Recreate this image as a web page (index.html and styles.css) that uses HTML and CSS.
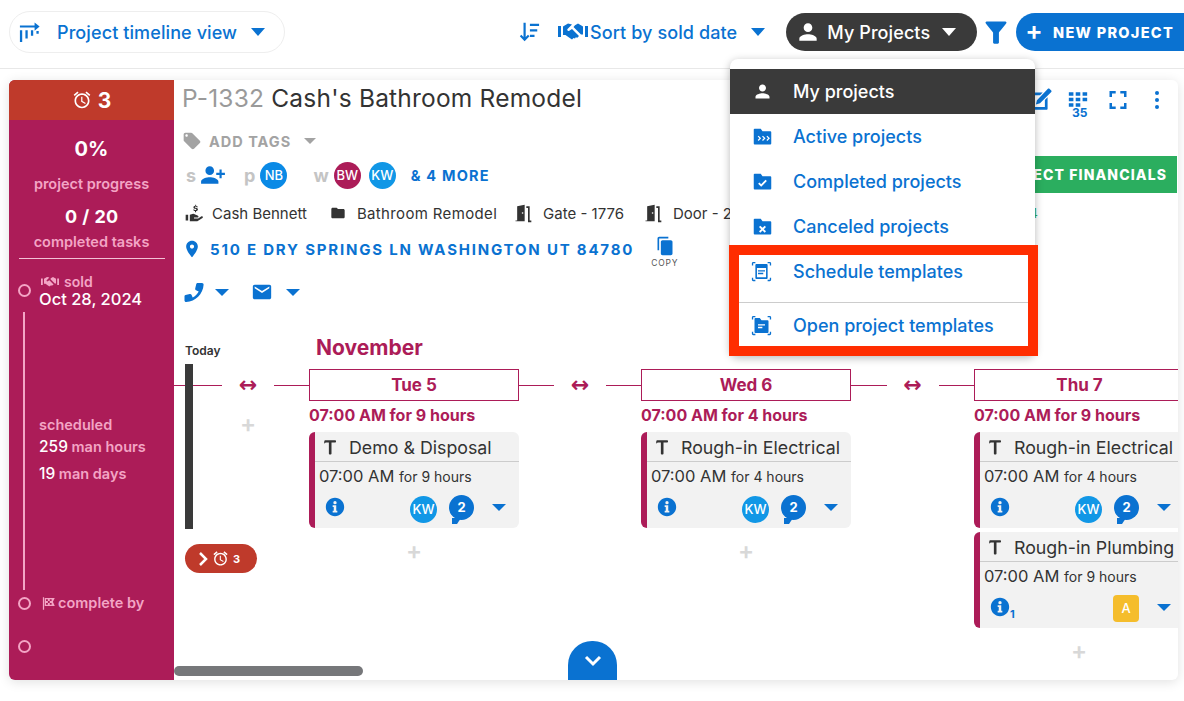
FILE: index.html
```html
<!DOCTYPE html>
<html lang="en">
<head>
<meta charset="utf-8">
<title>Project timeline</title>
<link rel="stylesheet" href="styles.css">
</head>
<body>
<svg class="sprite" aria-hidden="true">
  <symbol id="person" viewBox="0 0 24 24"><path d="M12 12c2.21 0 4-1.79 4-4s-1.79-4-4-4-4 1.79-4 4 1.79 4 4 4zm0 2c-2.67 0-8 1.34-8 4v2h16v-2c0-2.66-5.33-4-8-4z"/></symbol>
  <symbol id="personadd" viewBox="0 0 24 24"><path d="M9 12c2.21 0 4-1.79 4-4s-1.79-4-4-4-4 1.79-4 4 1.79 4 4 4zm9-2V7h2v3h3v2h-3v3h-2v-3h-3v-2h3zm-9 4c-2.67 0-8 1.34-8 4v2h16v-2c0-2.66-5.33-4-8-4z"/></symbol>
  <symbol id="funnel" viewBox="0 0 24 24"><path d="M3.2 4.600C5.500 7.600 9.500 12.600 9.500 12.600V21c0 .55.45 1 1 1h3c.55 0 1-.45 1-1v-8.400s4-5 6.300-8c.51-.66.04-1.600-.79-1.600H4c-.83 0-1.300.94-.8 1.600z"/></symbol>
  <symbol id="phone" viewBox="0 0 24 24"><path d="M3.500 15l4.300-1c.7-.2 1.400.2 1.700.8l1.200 2.800c2.300-1.200 4.800-3.700 6-6L14 10.300c-.6-.3-1-1-.8-1.700l1-4.300C14.400 3.500 15 3 15.800 3H20c.9 0 1.700.8 1.600 1.700C21 14 13.500 21.500 4.200 22.100 3.300 22.200 2.500 21.400 2.500 20.500v-4.200c0-.6.400-1.200 1-1.300z"/></symbol>
  <symbol id="mail" viewBox="0 0 24 24"><path d="M20 4H4c-1.1 0-1.99.9-1.99 2L2 18c0 1.1.9 2 2 2h16c1.1 0 2-.9 2-2V6c0-1.1-.9-2-2-2zm0 4l-8 5-8-5V6l8 5 8-5v2z"/></symbol>
  <symbol id="place" viewBox="0 0 24 24"><path d="M12 2C8.13 2 5 5.13 5 9c0 5.25 7 13 7 13s7-7.75 7-13c0-3.87-3.13-7-7-7zm0 9.5c-1.38 0-2.5-1.12-2.5-2.5s1.12-2.5 2.5-2.5 2.5 1.12 2.5 2.5-1.12 2.5-2.5 2.5z"/></symbol>
  <symbol id="tag" viewBox="0 0 24 24"><path d="M21.41 11.58l-9-9C12.05 2.22 11.55 2 11 2H4c-1.1 0-2 .9-2 2v7c0 .55.22 1.05.59 1.42l9 9c.36.36.86.58 1.41.58.55 0 1.05-.22 1.41-.59l7-7c.37-.36.59-.86.59-1.41 0-.55-.23-1.06-.59-1.42zM5.5 7C4.67 7 4 6.33 4 5.5S4.67 4 5.5 4 7 4.67 7 5.5 6.33 7 5.5 7z"/></symbol>
  <symbol id="folder" viewBox="0 0 24 24"><path d="M10 4H4c-1.1 0-1.99.9-1.99 2L2 18c0 1.1.9 2 2 2h16c1.1 0 2-.9 2-2V8c0-1.1-.9-2-2-2h-8l-2-2z"/></symbol>
  <symbol id="info" viewBox="0 0 24 24"><path d="M12 1C5.9 1 1 5.9 1 12s4.9 11 11 11 11-4.900 11-11S18.100 1 12 1zm2.800 17.500H9.200v-2h1.300V12H9.200v-2h4.300v6.500h1.300v2zM12 8.800a2 2 0 1 1 0-4 2 2 0 0 1 0 4z"/></symbol>
  <symbol id="alarm" viewBox="0 0 24 24"><path d="M22 5.72l-4.6-3.86-1.29 1.53 4.6 3.86L22 5.72zM7.88 3.39L6.6 1.86 2 5.71l1.29 1.53 4.59-3.85zM12.5 8H11v6l4.75 2.85.75-1.23-4-2.37V8zM12 4c-4.97 0-9 4.03-9 9s4.02 9 9 9c4.97 0 9-4.03 9-9s-4.03-9-9-9zm0 16c-3.87 0-7-3.13-7-7s3.13-7 7-7 7 3.13 7 7-3.13 7-7 7z"/></symbol>
  <symbol id="edit" viewBox="0 0 24 24"><path d="M20.700 1.600l1.700 1.700c.4.400.4 1 0 1.400L12 15.100l-3.800 1 1-3.800L19.300 1.600c.4-.4 1-.4 1.400 0zM4 5h10.500l-2.500 2.500H5.500v11h11V12l2.500-2.500V20c0 .6-.4 1-1 1H4c-.6 0-1-.4-1-1V6c0-.6.4-1 1-1z"/></symbol>
  <symbol id="full" viewBox="0 0 24 24"><path d="M7 15H3.500v6h6.200v-2.500H6V15zM3.500 9H6V5.500h3.700V3H3.500v6zM18 18.500h-3.700V21h6.200v-6H18v3.500zM14.300 3v2.500H18V9h2.500V3h-6.200z"/></symbol>
  <symbol id="copy" viewBox="0 0 24 24"><path d="M16 1H5c-1.100 0-2 .9-2 2v14h2V3h11V1zm3 4H9c-1.100 0-2 .9-2 2v14c0 1.100.9 2 2 2h10c1.100 0 2-.9 2-2V7c0-1.100-.9-2-2-2z"/></symbol>
  <symbol id="hammer" viewBox="0 0 24 24"><path d="M5.500 3H19c.6 0 1 .4 1 1v1c0 .6-.4 1-1 1h-5v14.500c0 .8-.6 1.500-1.500 1.500h-.5c-.8 0-1.500-.7-1.500-1.500V6H7C6 6 5 6.500 4.500 7.500 4 6 4.300 3 5.500 3z"/></symbol>
  <symbol id="door" viewBox="0 0 24 24"><path d="M3 21h2V4l9-2v20l-11-.2V21zM11.500 11a1 1 0 1 0 0 2 1 1 0 0 0 0-2zM16 4h4v17h2v2h-4V6h-2V4z"/></symbol>
  <symbol id="hand" viewBox="0 0 24 24"><path d="M2 14h3v7H2v-7zm5 0l4-1c1 0 5 2 6 2.500.8.500.5 2-.8 2H12v1h5l4-2.500c1.500-.5 2.300 1 1.200 2L16 22H7v-8zM14.500 2v1.200c1.200.1 2 .8 2.100 1.800h-1.400c-.1-.5-.5-.7-1.100-.7-.6 0-1 .3-1 .7 0 .5.500.6 1.300.8 1.200.3 2.300.7 2.300 2 0 1-.8 1.700-2.200 1.900V11h-1.300V9.700c-1.300-.2-2.200-.9-2.200-2h1.400c.1.500.600.8 1.300.8.700 0 1.100-.3 1.100-.7 0-.5-.500-.6-1.300-.8-1.200-.3-2.200-.7-2.200-2 0-1 .8-1.700 2.200-1.800V2h1.300z"/></symbol>
  <symbol id="handshake" viewBox="0 0 30 20"><path d="M0 4h3v11H0zM27 4h3v11h-3zM5 4.500l5-3 4 1-4.500 4.500c-.8.900.4 2.600 1.800 1.800L14 7l7 7-2 2-1-1-1 1.500-1.500-.5-1.500 1.500-3-2-3.500-2.500H5v-9zM25 4.500v8h-2L15.500 5 17 3.300l3-1.800 5 3z"/></symbol>
  <symbol id="sort" viewBox="0 0 24 24"><path d="M6 2h2.400v15.500l2.500-2.500 1.600 1.600L7.200 22 2 16.600 3.600 15 6 17.500V2zM13 3h10v2.500H13V3zm0 6h8v2.500h-8V9zm0 6h5v2.500h-5V15z"/></symbol>
  <symbol id="timeline" viewBox="0 0 24 24"><path d="M1 10h2.500v13H1zM7 10h2.500v9H7zM13 10h2.500v6H13zM19 11h2.500v3H19zM1 5h16V1.500L22.500 6 17 10.500V7H1z"/></symbol>
  <symbol id="flag" viewBox="0 0 24 24"><path d="M3 2h2v20H3V2zm3 1h16l-3 6 3 7H6V3zm2 2v3h3V5H8zm6 0v3h3V5h-3zm-3 3v3h3V8h-3zm-3 3v3h3v-3H8zm6 0v3h3v-3h-3z"/></symbol>
  <symbol id="f-active" viewBox="0 0 24 24"><path d="M3 3h7l2 3h9c.6 0 1 .4 1 1v13c0 .6-.4 1-1 1H3c-.6 0-1-.4-1-1V4c0-.6.4-1 1-1zm3.500 9l2 2-2 2 1 1 3-3-3-3-1 1zm5 0l2 2-2 2 1 1 3-3-3-3-1 1zm5 0l2 2-2 2 1 1 3-3-3-3-1 1z"/></symbol>
  <symbol id="f-done" viewBox="0 0 24 24"><path d="M3 3h7l2 3h9c.6 0 1 .4 1 1v13c0 .6-.4 1-1 1H3c-.6 0-1-.4-1-1V4c0-.6.4-1 1-1zm5.500 10L7 14.500l3.500 3.500L17 11.500 15.500 10l-5 5-2-2z"/></symbol>
  <symbol id="f-cancel" viewBox="0 0 24 24"><path d="M3 3h7l2 3h9c.6 0 1 .4 1 1v13c0 .6-.4 1-1 1H3c-.6 0-1-.4-1-1V4c0-.6.4-1 1-1zm6.500 8L8 12.500l2.500 2.500L8 17.500 9.500 19l2.500-2.500 2.500 2.500 1.500-1.500-2.500-2.500 2.500-2.500-1.500-1.500L12 13.500 9.500 11z"/></symbol>
  <symbol id="tpl-cal" viewBox="0 0 24 24"><path fill-rule="evenodd" d="M1 5V2.500C1 1.700 1.700 1 2.500 1H5v1.500H2.500V5H1zm18-4h2.500c.8 0 1.500.7 1.500 1.500V5h-1.500V2.500H19V1zM1 19h1.500v2.500H5V23H2.500C1.700 23 1 22.300 1 21.500V19zm20.500 0H23v2.500c0 .8-.7 1.500-1.500 1.500H19v-1.500h2.500V19zM6 3.500h12c.6 0 1 .4 1 1v15c0 .6-.4 1-1 1H6c-.6 0-1-.4-1-1v-15c0-.6.4-1 1-1zm.800 4.500v10.700h10.400V8H6.800zM8 10.500h8V12H8v-1.500zm0 3h6V15H8v-1.500z"/></symbol>
  <symbol id="tpl-open" viewBox="0 0 24 24"><path fill-rule="evenodd" d="M1 5V2.500C1 1.700 1.700 1 2.500 1H5v1.500H2.500V5H1zm18-4h2.500c.8 0 1.500.7 1.500 1.500V5h-1.500V2.500H19V1zM1 19h1.500v2.500H5V23H2.500C1.700 23 1 22.300 1 21.500V19zm20.500 0H23v2.500c0 .8-.7 1.500-1.500 1.500H19v-1.500h2.500V19zM5 3.500h5L12 6h7c.6 0 1 .4 1 1v12.500c0 .6-.4 1-1 1H5c-.6 0-1-.4-1-1V4.500c0-.6.4-1 1-1zm3 7V12h8v-1.500H8zm0 3V15h5v-1.500H8z"/></symbol>
  <symbol id="grid" viewBox="0 0 24 18"><path d="M2 1h5v4H2zM9.500 1h5v4h-5zM17 1h5v4h-5zM2 7h5v4H2zM9.500 7h5v4h-5zM17 7h5v4h-5zM2 13h5v4H2zM9.500 13h5v4h-5z"/></symbol>
</svg>

<header class="topbar">
  <div class="view-pill">
    <svg class="ico ico-timeline"><use href="#timeline"/></svg>
    <span>Project timeline view</span>
    <i class="caret caret-lg"></i>
  </div>
  <div class="sort">
    <svg class="ico ico-sort"><use href="#sort"/></svg>
    <svg class="ico ico-shake"><use href="#handshake"/></svg>
    <span>Sort by sold date</span>
    <i class="caret caret-lg"></i>
  </div>
  <div class="my-pill">
    <svg class="ico ico-person"><use href="#person"/></svg>
    <span>My Projects</span>
    <i class="caret caret-lg caret-white"></i>
  </div>
  <svg class="ico ico-funnel"><use href="#funnel"/></svg>
  <div class="new-btn"><span class="plus">+</span><span>NEW PROJECT</span></div>
</header>

<main class="board">
  <aside class="side">
    <div class="alert"><svg class="ico ico-alarm"><use href="#alarm"/></svg><b>3</b></div>
    <div class="pct">0%</div>
    <div class="lbl lbl-progress">project progress</div>
    <div class="count">0 / 20</div>
    <div class="lbl lbl-tasks">completed tasks</div>
    <div class="side-rule"></div>
    <div class="track">
      <div class="sold">
        <span class="dot"></span>
        <div class="sold-lbl"><svg class="ico ico-shake-s"><use href="#handshake"/></svg>sold</div>
        <div class="sold-date">Oct 28, 2024</div>
      </div>
      <div class="sched">
        <div class="lbl">scheduled</div>
        <div class="stat stat-first"><b>259</b> man hours</div>
        <div class="stat"><b>19</b> man days</div>
      </div>
      <div class="done-by">
        <span class="dot"></span>
        <svg class="ico ico-flag"><use href="#flag"/></svg>
        <span class="lbl">complete by</span>
      </div>
      <div class="last-dot"><span class="dot"></span></div>
    </div>
  </aside>

  <section class="main">
    <div class="title-row">
      <h1><span class="code">P-1332</span> Cash's Bathroom Remodel</h1>
      <div class="tools">
        <svg class="ico ico-edit"><use href="#edit"/></svg>
        <div class="grid35"><svg class="ico ico-grid"><use href="#grid"/></svg><span>35</span></div>
        <svg class="ico ico-full"><use href="#full"/></svg>
        <div class="kebab"><i></i><i></i><i></i></div>
      </div>
    </div>
    <div class="tags-row">
      <svg class="ico ico-tag"><use href="#tag"/></svg>
      <span>ADD TAGS</span>
      <i class="caret caret-grey"></i>
    </div>
    <div class="people-row">
      <span class="role">s</span>
      <svg class="ico ico-add"><use href="#personadd"/></svg>
      <span class="role role-p">p</span>
      <span class="avatar av-blue">NB</span>
      <span class="role role-w">w</span>
      <span class="avatar av-red">BW</span>
      <span class="avatar av-sky">KW</span>
      <span class="more">&amp; 4 MORE</span>
      <div class="fin-btn">PROJECT FINANCIALS</div>
    </div>
    <div class="info-row">
      <svg class="ico ico-hand"><use href="#hand"/></svg><span class="info-name">Cash Bennett</span>
      <svg class="ico ico-folder"><use href="#folder"/></svg><span class="info-type">Bathroom Remodel</span>
      <svg class="ico ico-door"><use href="#door"/></svg><span class="info-gate">Gate - 1776</span>
      <svg class="ico ico-door"><use href="#door"/></svg><span>Door - 2</span>
      <span class="green-mark">4</span>
    </div>
    <div class="addr-row">
      <svg class="ico ico-place"><use href="#place"/></svg>
      <span class="addr">510 E DRY SPRINGS LN WASHINGTON UT 84780</span>
      <div class="copy"><svg class="ico ico-copy"><use href="#copy"/></svg><span>COPY</span></div>
    </div>
    <div class="contact-row">
      <svg class="ico ico-phone"><use href="#phone"/></svg>
      <i class="caret"></i>
      <svg class="ico ico-mail"><use href="#mail"/></svg>
      <i class="caret"></i>
    </div>

    <div class="timeline">
      <div class="today">
        <div class="today-lbl">Today</div>
        <div class="today-bar"></div>
        <div class="alarm-pill">
          <svg class="pill-chev" viewBox="0 0 10 16"><path d="M2 2l6 6-6 6"/></svg>
          <svg class="ico ico-alarm-s"><use href="#alarm"/></svg>
          <b>3</b>
        </div>
      </div>

      <div class="link link-first">
        <div class="link-row"><span class="ln"></span><span class="arrow">&#8596;</span><span class="ln"></span></div>
        <div class="add add-link">+</div>
      </div>

      <div class="day">
        <div class="month">November</div>
        <div class="day-head">Tue 5</div>
        <div class="day-time">07:00 AM for 9 hours</div>
        <article class="task">
          <div class="task-head"><svg class="ico ico-hammer"><use href="#hammer"/></svg>Demo &amp; Disposal</div>
          <div class="task-time"><span>07:00 AM</span> <small>for 9 hours</small></div>
          <div class="task-foot">
            <svg class="ico ico-info"><use href="#info"/></svg>
            <span class="spacer"></span>
            <span class="avatar av-sky av-s">KW</span>
            <span class="bubble">2</span>
            <i class="caret"></i>
          </div>
        </article>
        <div class="add">+</div>
      </div>

      <div class="link">
        <div class="link-row"><span class="ln"></span><span class="arrow">&#8596;</span><span class="ln"></span></div>
      </div>

      <div class="day">
        <div class="month"></div>
        <div class="day-head">Wed 6</div>
        <div class="day-time">07:00 AM for 4 hours</div>
        <article class="task">
          <div class="task-head"><svg class="ico ico-hammer"><use href="#hammer"/></svg>Rough-in Electrical</div>
          <div class="task-time"><span>07:00 AM</span> <small>for 4 hours</small></div>
          <div class="task-foot">
            <svg class="ico ico-info"><use href="#info"/></svg>
            <span class="spacer"></span>
            <span class="avatar av-sky av-s">KW</span>
            <span class="bubble">2</span>
            <i class="caret"></i>
          </div>
        </article>
        <div class="add">+</div>
      </div>

      <div class="link link-wide">
        <div class="link-row"><span class="ln"></span><span class="arrow">&#8596;</span><span class="ln"></span></div>
      </div>

      <div class="day">
        <div class="month"></div>
        <div class="day-head">Thu 7</div>
        <div class="day-time">07:00 AM for 9 hours</div>
        <article class="task">
          <div class="task-head"><svg class="ico ico-hammer"><use href="#hammer"/></svg>Rough-in Electrical</div>
          <div class="task-time"><span>07:00 AM</span> <small>for 4 hours</small></div>
          <div class="task-foot">
            <svg class="ico ico-info"><use href="#info"/></svg>
            <span class="spacer"></span>
            <span class="avatar av-sky av-s">KW</span>
            <span class="bubble">2</span>
            <i class="caret"></i>
          </div>
        </article>
        <article class="task task-next">
          <div class="task-head"><svg class="ico ico-hammer"><use href="#hammer"/></svg>Rough-in Plumbing</div>
          <div class="task-time"><span>07:00 AM</span> <small>for 9 hours</small></div>
          <div class="task-foot">
            <svg class="ico ico-info"><use href="#info"/></svg><sub class="info-n">1</sub>
            <span class="spacer"></span>
            <span class="letter">A</span>
            <i class="caret"></i>
          </div>
        </article>
        <div class="add">+</div>
      </div>
    </div>

    <div class="scrollbar"></div>
    <div class="expand"><svg viewBox="0 0 20 12"><path d="M3 2l7 7 7-7"/></svg></div>
  </section>
</main>

<nav class="menu">
  <div class="menu-item menu-active"><svg class="ico"><use href="#person"/></svg>My projects</div>
  <div class="menu-item"><svg class="ico"><use href="#f-active"/></svg>Active projects</div>
  <div class="menu-item"><svg class="ico"><use href="#f-done"/></svg>Completed projects</div>
  <div class="menu-item"><svg class="ico"><use href="#f-cancel"/></svg>Canceled projects</div>
  <div class="menu-marked">
    <div class="menu-item menu-tpl menu-tpl-first"><svg class="ico"><use href="#tpl-cal"/></svg>Schedule templates</div>
    <div class="menu-item menu-tpl menu-tpl-last"><svg class="ico"><use href="#tpl-open"/></svg>Open project templates</div>
  </div>
</nav>
</body>
</html>
```
FILE: styles.css
```css
* { box-sizing: border-box; }
html, body { margin: 0; height: 701px; overflow: hidden; }
body {
  position: relative;
  background: #fff;
  color: #333;
  font-family: Inter, "Noto Sans", sans-serif;
}
.sprite { display: none; }
.ico { display: block; flex: none; fill: #0a72d1; }

.caret {
  display: block; flex: none; width: 0; height: 0;
  border-left: 7px solid transparent;
  border-right: 7px solid transparent;
  border-top: 7px solid #0a72d1;
}
.caret-lg { border-left-width: 7px; border-right-width: 7px; border-top-width: 8px; }
.caret-white { border-top-color: #fff; }
.caret-grey { border-left-width: 6px; border-right-width: 6px; border-top-width: 6px; border-top-color: #a3a3a3; }

/* top bar */
.topbar {
  height: 69px;
  padding: 0 0 4px 9px;
  display: flex;
  align-items: center;
  border-bottom: 1px solid #e8e8e8;
  color: #0a72d1;
  font-size: 18px;
  font-weight: 500;
  letter-spacing: .1px;
}
.view-pill {
  width: 276px; height: 42px;
  display: flex; align-items: center;
  padding-left: 9px;
  border: 1px solid #eee;
  border-radius: 21px;
}
.ico-timeline { width: 22px; height: 22px; margin-right: 16px; }
.view-pill .caret { margin-left: 14px; }
.sort { display: flex; align-items: center; margin-left: 233px; }
.ico-sort { width: 22px; height: 22px; margin-right: 18px; }
.ico-shake { width: 30px; height: 20px; margin-right: 2px; }
.sort .caret { margin-left: 14px; }
.my-pill {
  width: 191px; height: 38px;
  margin-left: 21px;
  display: flex; align-items: center;
  padding-left: 9px;
  border-radius: 19px;
  background: #3a3a3a;
  color: #fff;
}
.ico-person { width: 26px; height: 26px; fill: #fff; margin-right: 6px; }
.my-pill .caret { margin-left: 12px; }
.ico-funnel { width: 28px; height: 28px; margin: 0 6px 0 5px; }
.new-btn {
  flex: 1; height: 38px;
  display: flex; align-items: center;
  padding-left: 9px;
  border-radius: 19px 0 0 19px;
  background: #0a72d1;
  color: #fff;
  font-size: 14.5px; font-weight: 800; letter-spacing: 1.3px;
  white-space: nowrap;
}
.plus { font-size: 26px; font-weight: 600; line-height: 1; margin: -3px 9px 0 0; }

/* board */
.board {
  display: flex;
  height: 600px; width: 1169px;
  margin: 11px 0 0 9px;
  border-radius: 6px;
  background: #fff;
  box-shadow: 0 2px 12px rgba(0,0,0,.12);
}
.side {
  width: 165px; flex: none;
  display: flex; flex-direction: column; align-items: center;
  background: #ac1c58;
  border-radius: 6px 0 0 6px;
  color: #fff;
}
.alert {
  width: 100%; height: 40px;
  display: flex; align-items: center; justify-content: center; gap: 6px;
  background: #bf3a2b;
  border-radius: 6px 0 0 0;
  font-size: 21px;
}
.ico-alarm { width: 20px; height: 20px; fill: #fff; }
.pct { margin-top: 17px; font-size: 20px; font-weight: 700; line-height: 24px; }
.lbl { color: #f3a5c5; font-size: 14.5px; font-weight: 600; line-height: 18px; white-space: nowrap; }
.lbl-progress { margin-top: 14px; }
.count { margin-top: 13px; font-size: 18px; font-weight: 700; line-height: 22px; word-spacing: 1px; }
.lbl-tasks { margin-top: 5px; }
.side-rule { width: 146px; height: 1px; margin-top: 7px; background: #f3c1d6; }
.track { position: relative; flex: 1; width: 100%; padding-left: 30px; }
.track::before {
  content: ""; position: absolute; left: 14px; top: 53px;
  width: 2px; height: 278px; background: #f3a5c5;
}
.dot {
  position: absolute; left: 9px;
  width: 13px; height: 13px;
  border: 2px solid #f3a5c5; border-radius: 50%;
}
.sold { position: relative; margin-top: 14px; }
.sold .dot { left: -21px; top: 11px; }
.sold-lbl { display: flex; align-items: center; gap: 5px; margin-left: 2px; color: #f3a5c5; font-size: 14px; font-weight: 600; line-height: 17px; }
.ico-shake-s { width: 18px; height: 12px; fill: #f3a5c5; }
.sold-date { font-size: 16.5px; font-weight: 500; line-height: 18px; white-space: nowrap; }
.sched { margin-top: 108px; }
.stat { margin-top: 8px; color: #f3a5c5; font-size: 14.5px; font-weight: 600; line-height: 19px; }
.stat b { color: #fff; font-size: 15.5px; font-weight: 500; }
.stat-first { margin-top: 3px; }
.done-by { position: relative; display: flex; align-items: center; gap: 2px; margin-top: 111px; height: 18px; margin-left: 2px; }
.done-by .dot { left: -23px; top: 3px; }
.ico-flag { width: 15px; height: 15px; fill: #f3a5c5; }
.last-dot { position: relative; margin-top: 28px; }
.last-dot .dot { left: -21px; top: 0; }

/* main */
.main { position: relative; flex: 1; min-width: 0; overflow: hidden; }
.title-row { display: flex; align-items: center; height: 36px; padding-left: 8px; }
h1 { margin: 0; font-size: 24.5px; font-weight: 400; letter-spacing: .2px; white-space: nowrap; }
.code { color: #9a9a9a; }
.tools { display: flex; align-items: center; margin-left: auto; }
.ico-edit { width: 26px; height: 26px; margin-top: 4px; }
.grid35 { position: relative; width: 26px; height: 34px; margin: 20px 0 0 14px; }
.ico-grid { width: 22px; height: 17px; }
.grid35 span { position: absolute; left: 5px; top: 14px; font-size: 12px; font-weight: 700; color: #0a72d1; }
.ico-full { width: 24px; height: 24px; margin: 4px 0 0 13px; }
.kebab { display: flex; flex-direction: column; gap: 3px; margin: 4px 19px 0 25px; }
.kebab i { width: 4px; height: 4px; border-radius: 50%; background: #0a72d1; }

.tags-row { display: flex; align-items: center; height: 24px; margin-top: 13px; padding-left: 8px; color: #a3a3a3; font-size: 14.5px; font-weight: 700; letter-spacing: 1px; }
.ico-tag { width: 20px; height: 20px; fill: #a3a3a3; margin-right: 7px; }
.tags-row .caret { margin-left: 13px; }

.people-row { display: flex; align-items: center; height: 28px; margin-top: 8px; padding-left: 12px; }
.role { color: #c4c4c4; font-size: 18px; font-weight: 700; }
.ico-add { width: 28px; height: 26px; margin-left: 3px; }
.role-p { margin-left: 17px; margin-right: 5px; }
.role-w { margin-left: 26px; margin-right: 5px; }
.avatar {
  display: flex; align-items: center; justify-content: center;
  width: 27px; height: 27px; flex: none;
  border-radius: 50%;
  color: #fff; font-size: 13px; font-weight: 500;
}
.av-blue { background: #0a8ae6; }
.av-red { background: #ac1c58; }
.av-sky { background: #1197e6; margin-left: 8px; }
.av-red + .av-sky { margin-left: 8px; }
.more { margin-left: 15px; color: #0a72d1; font-size: 14.5px; font-weight: 700; letter-spacing: 1.2px; white-space: nowrap; }
.fin-btn {
  margin: -1px 1px 0 auto;
  height: 37px; flex: none;
  display: flex; align-items: center;
  padding: 0 10px 0 20px;
  background: #2bae5f;
  color: #fff; font-size: 14px; font-weight: 800; letter-spacing: 1.1px;
  white-space: nowrap;
}

.info-row { display: flex; align-items: center; height: 22px; margin-top: 13px; padding-left: 10px; font-size: 15px; white-space: nowrap; }
.ico-hand { width: 20px; height: 20px; fill: #333; margin-right: 8px; }
.info-name { margin-right: 23px; }
.ico-folder { width: 16px; height: 16px; fill: #333; margin-right: 11px; }
.info-type { margin-right: 16px; letter-spacing: .35px; }
.ico-door { width: 20px; height: 20px; fill: #333; margin-right: 10px; }
.info-gate { margin-right: 19px; }
.green-mark { margin-left: auto; margin-right: 140px; color: #2bae5f; font-size: 13px; }

.addr-row { display: flex; align-items: center; height: 24px; margin-top: 13px; padding-left: 8px; }
.ico-place { width: 20px; height: 22px; margin-right: 8px; }
.addr { color: #0a72d1; font-size: 15px; font-weight: 700; letter-spacing: 1.8px; white-space: nowrap; }
.copy { display: flex; flex-direction: column; align-items: center; gap: 2px; margin: 6px 0 0 17px; color: #555; font-size: 8.500px; letter-spacing: .8px; line-height: 10px; }
.ico-copy { width: 20px; height: 20px; }

.contact-row { display: flex; align-items: center; height: 24px; margin-top: 19px; padding-left: 8px; }
.ico-phone { width: 24px; height: 24px; }
.contact-row .caret { margin-left: 9px; }
.ico-mail { width: 22px; height: 22px; margin-left: 22px; }
.ico-mail + .caret { margin-left: 13px; }

/* timeline */
.timeline { position: relative; display: flex; margin-top: 32px; }
.today { position: absolute; left: 11px; top: 7px; z-index: 1; }
.today-lbl { font-size: 12px; font-weight: 600; line-height: 16px; }
.today-bar { width: 8px; height: 165px; margin-top: 5px; background: #3a3a3a; }
.alarm-pill {
  display: flex; align-items: center; gap: 4px;
  width: 72px; height: 29px; margin-top: 15px; padding-left: 13px;
  border-radius: 15px;
  background: #bf3a2b; color: #fff; font-size: 11px;
}
.pill-chev { width: 10px; height: 16px; fill: none; stroke: #fff; stroke-width: 2.5; }
.ico-alarm-s { width: 17px; height: 17px; fill: #fff; }

.link { flex: none; width: 122px; padding-top: 33px; }
.link-wide { width: 123px; }
.link-first { width: 135px; }
.link-row { display: flex; align-items: center; height: 32px; }
.ln { flex: 1; height: 1px; background: #ac1c58; }
.arrow { width: 52px; text-align: center; color: #ac1c58; font-size: 22px; font-weight: 700; line-height: 1; font-family: "DejaVu Sans", sans-serif; }
.link-first .ln:first-child { flex: none; width: 48px; }
.add { color: #d8d8d8; font-size: 24px; font-weight: 600; line-height: 24px; text-align: center; margin-top: 11px; }
.add-link { margin: 11px 0 0 48px; width: 52px; }

.day { flex: none; width: 210px; }
.month { height: 33px; color: #ac1c58; font-size: 21px; font-weight: 700; line-height: 24px; padding-left: 7px; }
.day-head {
  height: 32px;
  display: flex; align-items: center; justify-content: center;
  border: 1px solid #ac1c58;
  color: #ac1c58; font-size: 17px; font-weight: 700;
}
.day:last-child .day-head { border-right: 0; }
.day-time { height: 31px; color: #ac1c58; font-size: 16px; font-weight: 700; line-height: 29px; white-space: nowrap; }
.task {
  height: 96px;
  border-left: 6px solid #ac1c58;
  border-radius: 6px;
  background: #f2f2f2;
}
.task-next { margin-top: 4px; }
.task-head {
  display: flex; align-items: center;
  height: 30px; padding: 2px 0 0 6px;
  border-bottom: 1px solid #ccc;
  font-size: 17.8px; white-space: nowrap;
}
.ico-hammer { width: 18px; height: 18px; fill: #333; margin: -2px 10px 0 0; }
.task-time { height: 30px; padding-left: 4px; font-size: 16.5px; line-height: 29px; white-space: nowrap; }
.task-time small { font-size: 14px; }
.task-foot { display: flex; align-items: center; height: 32px; padding: 0 13px 2px 10px; }
.ico-info { width: 20px; height: 20px; }
.info-n { align-self: flex-end; margin-bottom: 2px; color: #0a72d1; font-size: 11px; font-weight: 700; line-height: 12px; }
.spacer { flex: 1; }
.av-s { margin: 4px 0 0; }
.bubble {
  position: relative;
  display: flex; align-items: center; justify-content: center;
  width: 25px; height: 25px; margin: 0 0 0 12px;
  border-radius: 50%;
  background: #0a72d1; color: #fff; font-size: 13px; font-weight: 700;
}
.bubble::after {
  content: ""; position: absolute; left: 3px; bottom: -4px;
  border-left: 5px solid #0a72d1;
  border-right: 4px solid transparent;
  border-top: 6px solid #0a72d1;
}
.task-foot .caret { margin-left: 18px; }
.letter {
  display: flex; align-items: center; justify-content: center;
  width: 26px; height: 27px; margin-top: 2px;
  border-radius: 4px;
  background: #f5bd2c; color: #fff; font-size: 13px; font-weight: 500;
}

.scrollbar { position: absolute; left: 0; top: 586px; width: 189px; height: 10px; border-radius: 5px; background: #76777a; }
.expand {
  position: absolute; left: 394px; bottom: 0;
  width: 49px; height: 39px;
  display: flex; align-items: center; justify-content: center;
  border-radius: 24px 24px 0 0;
  background: #0a72d1;
}
.expand svg { width: 20px; height: 12px; fill: none; stroke: #fff; stroke-width: 3; }

/* dropdown */
.menu {
  position: absolute; left: 730px; top: 59px;
  width: 305px; height: 297px;
  padding-top: 10px;
  border-radius: 8px;
  background: #fff;
  box-shadow: 0 2px 8px rgba(0,0,0,.28);
  z-index: 5;
}
.menu-item {
  display: flex; align-items: center;
  height: 45px; padding-left: 22px;
  color: #0a72d1; font-size: 18px; font-weight: 500;
}
.menu-item .ico { width: 21px; height: 21px; margin-right: 20px; }
.menu-active { background: #3a3a3a; color: #fff; }
.menu-active .ico { fill: #fff; }
.menu-marked {
  width: 309px; height: 111px;
  margin: -4px 0 0 -1px;
  border: 10px solid #ff2d00;
}
.menu-tpl { padding-left: 12px; align-items: flex-start; }
.menu-tpl .ico { margin-right: 21px; }
.menu-tpl-first { height: 48px; padding-top: 6px; border-bottom: 1px solid #ccc; }
.menu-tpl-last { height: 43px; padding-top: 12px; }
```
